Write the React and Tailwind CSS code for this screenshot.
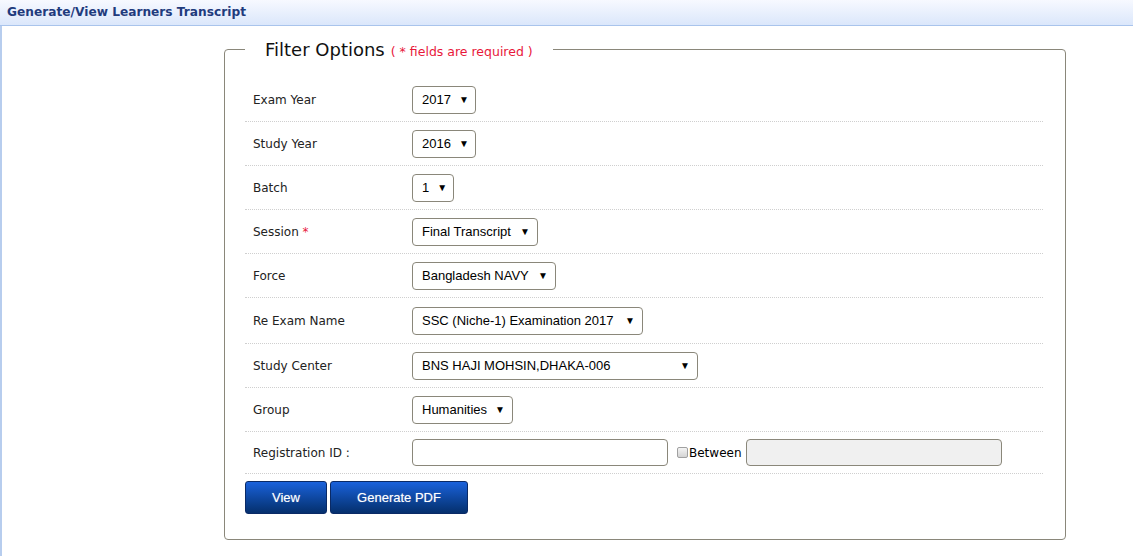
import React from 'react'

const rows = [
  { label: 'Exam Year', value: '2017', width: 'w-[64px]' },
  { label: 'Study Year', value: '2016', width: 'w-[64px]' },
  { label: 'Batch', value: '1', width: 'w-[42px]' },
  { label: 'Session', value: 'Final Transcript', width: 'w-[126px]', required: true },
  { label: 'Force', value: 'Bangladesh NAVY', width: 'w-[144px]' },
  { label: 'Re Exam Name', value: 'SSC (Niche-1) Examination 2017', width: 'w-[231px]', tall: true },
  { label: 'Study Center', value: 'BNS HAJI MOHSIN,DHAKA-006', width: 'w-[286px]' },
  { label: 'Group', value: 'Humanities', width: 'w-[101px]' },
]

function SelectBox({ value, width }) {
  return (
    <div
      className={`${width} h-[28px] flex items-center justify-between pl-[9px] pr-[7px] border border-[#8a877a] rounded-[4px] bg-white text-[13px] text-black font-['Liberation_Sans',Arial,sans-serif]`}
    >
      <span className="whitespace-nowrap">{value}</span>
      <span className="text-[10px] leading-none ml-2">▼</span>
    </div>
  )
}

function Row({ label, required, children, h = 'h-[44px]' }) {
  return (
    <div className={`${h} flex items-center border-b border-dotted border-[#cfcfcf]`}>
      <div className="w-[167px] pl-[8px] text-[12px] text-[#222]">
        {label}
        {required && <span className="text-[#e8173a]"> *</span>}
      </div>
      {children}
    </div>
  )
}

export default function App() {
  return (
    <div className="w-[1133px] h-[556px] bg-white overflow-hidden font-['DejaVu_Sans',Verdana,sans-serif]">
      <div className="h-[26px] border-b border-[#a9c4ec] bg-gradient-to-b from-[#f7f9ff] to-[#dbe7fb] flex items-center pl-[7px]">
        <h1 className="text-[12.2px] font-bold text-[#1f3b7d]">Generate/View Learners Transcript</h1>
      </div>
      <div className="h-[530px] border-l-2 border-[#b7cdee] pt-[10px]">
        <fieldset className="ml-[222px] w-[842px] border border-[#8a877a] rounded-[4px] pl-[20px] pr-[22px] pb-[25px]">
          <legend className="px-[20px] ml-0">
            <span className="text-[18px] text-[#111]">Filter Options</span>
            <span className="text-[12.5px] text-[#e8173a] ml-[6px]">( * fields are required )</span>
          </legend>
          <div className="mt-[15px]">
            {rows.map((r) => (
              <Row key={r.label} label={r.label} required={r.required} h={r.tall ? 'h-[46px]' : 'h-[44px]'}>
                <SelectBox value={r.value} width={r.width} />
              </Row>
            ))}
            <Row label="Registration ID :" h="h-[42px]">
              <div className="w-[256px] h-[27px] border border-[#8a877a] rounded-[4px] bg-white" />
              <span className="ml-[9px] w-[11px] h-[11px] rounded-[2px] border border-[#a0a0a0] bg-gradient-to-b from-[#f4f4f4] to-[#d4d4d4]" />
              <span className="ml-[1px] text-[12px] text-black">Between</span>
              <div className="ml-[4px] w-[256px] h-[27px] border border-[#8a877a] rounded-[4px] bg-[#f0f0f0]" />
            </Row>
          </div>
          <div className="flex gap-[3px] mt-[7px]">
            <button className="w-[82px] h-[33px] rounded-[3px] border border-[#0a2a66] bg-gradient-to-b from-[#1a62dc] to-[#05306d] text-white text-[13px] font-['Liberation_Sans',Arial,sans-serif] [text-shadow:0_0_1px_rgba(255,255,255,0.5)]">
              View
            </button>
            <button className="w-[138px] h-[33px] rounded-[3px] border border-[#0a2a66] bg-gradient-to-b from-[#1a62dc] to-[#05306d] text-white text-[13px] font-['Liberation_Sans',Arial,sans-serif] [text-shadow:0_0_1px_rgba(255,255,255,0.5)]">
              Generate PDF
            </button>
          </div>
        </fieldset>
      </div>
    </div>
  )
}
